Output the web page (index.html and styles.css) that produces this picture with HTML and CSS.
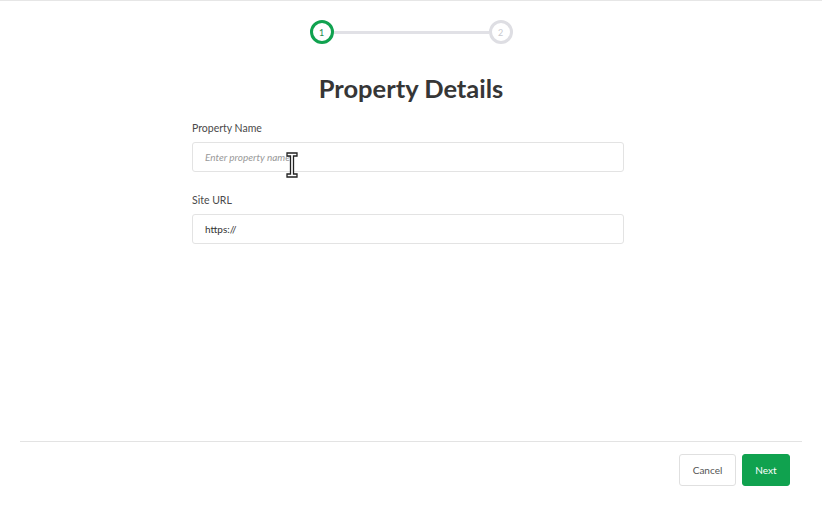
FILE: index.html
```html
<!DOCTYPE html>
<html>
<head>
<meta charset="utf-8">
<link rel="stylesheet" href="styles.css">
</head>
<body>
<div class="page">
  <div class="stepper">
    <div class="step active">1</div>
    <div class="step-line"></div>
    <div class="step">2</div>
  </div>
  <h1 class="title">Property Details</h1>
  <form class="form">
    <div class="field">
      <label class="label">Property Name</label>
      <div class="input-wrap">
        <input class="input" type="text" placeholder="Enter property name">
        <svg class="cursor" width="12" height="26" viewBox="0 0 12 26"><path d="M1 1h10v3H7.5v18H11v3H1v-3h3.5V4H1z" fill="#fff" stroke="#222" stroke-width="1.3"/></svg>
      </div>
    </div>
    <div class="field">
      <label class="label">Site URL</label>
      <input class="input" type="text" value="https://">
    </div>
  </form>
  <div class="footer">
    <div class="actions">
      <button class="btn btn-cancel" type="button">Cancel</button>
      <button class="btn btn-next" type="button">Next</button>
    </div>
  </div>
</div>
</body>
</html>
```
FILE: styles.css
```css
html, body {
  margin: 0;
  padding: 0;
  background: #fff;
}
body {
  font-family: Lato, "Open Sans", sans-serif;
  color: #333;
}
.page {
  width: 822px;
  height: 505px;
  border-top: 1px solid #e6e6e6;
  display: flex;
  flex-direction: column;
}
.stepper {
  margin-top: 19px;
  display: flex;
  align-items: center;
  justify-content: center;
}
.step {
  width: 18px;
  height: 18px;
  border: 3px solid #dedee3;
  border-radius: 50%;
  display: flex;
  align-items: center;
  justify-content: center;
  font-size: 9px;
  color: #c9c9ce;
  background: #fff;
}
.step.active {
  border-color: #10a24f;
  color: #1c8a4a;
}
.step-line {
  width: 155px;
  height: 3px;
  background: #e1e1e6;
}
.title {
  margin: 28px 0 0;
  text-align: center;
  font-size: 25.5px;
  line-height: 32px;
  font-weight: 700;
  color: #363636;
}
.form {
  margin: 17px 0 0 192px;
  width: 432px;
  display: flex;
  flex-direction: column;
  gap: 21px;
}
.field {
  display: flex;
  flex-direction: column;
}
.label {
  font-size: 10.5px;
  line-height: 14px;
  color: #4a4a4a;
  margin-bottom: 7px;
}
.input-wrap {
  position: relative;
}
.input {
  box-sizing: border-box;
  width: 432px;
  height: 30px;
  border: 1px solid #e3e3e3;
  border-radius: 3px;
  padding: 0 12px;
  font-family: Lato, sans-serif;
  font-size: 10px;
  color: #333;
  outline: none;
}
.input::placeholder {
  font-style: italic;
  color: #999;
}
.cursor {
  position: absolute;
  left: 94px;
  top: 10px;
}
.footer {
  margin-top: auto;
  margin-bottom: 20px;
  padding: 0 20px;
}
.actions {
  border-top: 1px solid #e3e3e3;
  padding: 12px 12px 0 0;
  display: flex;
  justify-content: flex-end;
  gap: 6px;
}
.btn {
  height: 32px;
  border-radius: 3px;
  font-family: Lato, sans-serif;
  font-size: 10px;
  cursor: pointer;
}
.btn-cancel {
  width: 57px;
  background: #fff;
  border: 1px solid #e0e0e0;
  color: #555;
}
.btn-next {
  width: 48px;
  background: #10a24f;
  border: 1px solid #10a24f;
  color: #fff;
}
```
